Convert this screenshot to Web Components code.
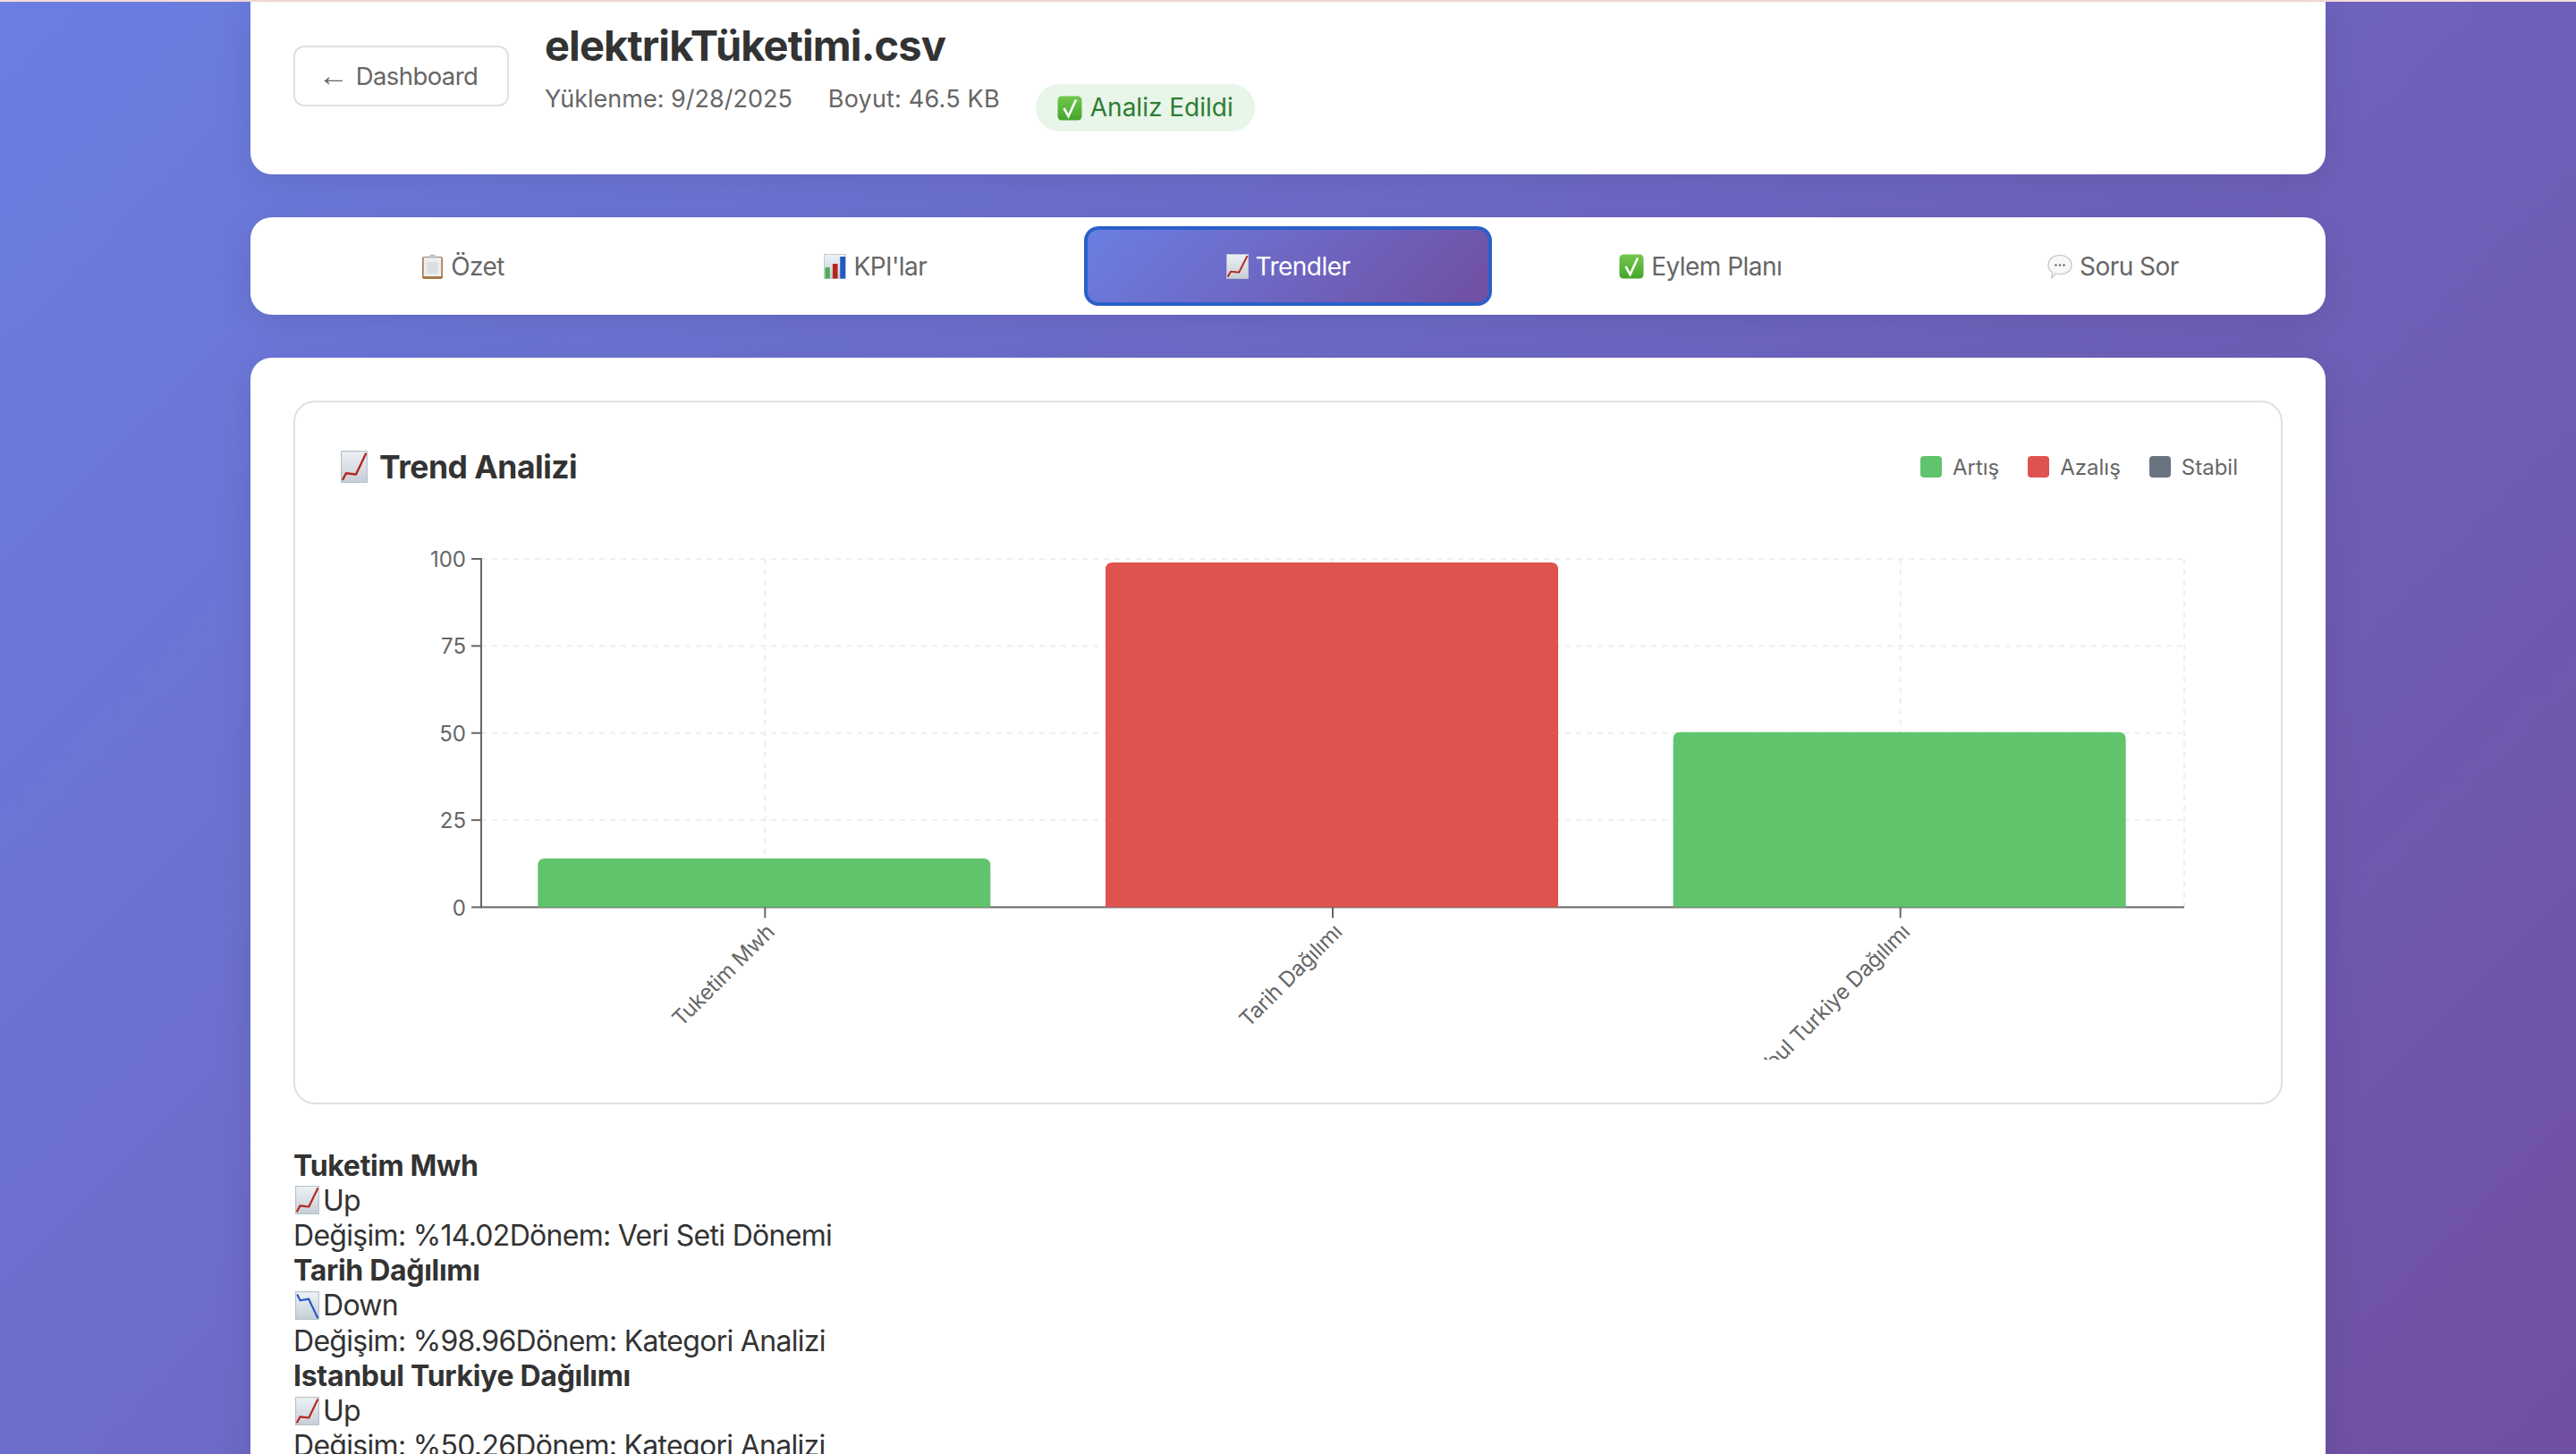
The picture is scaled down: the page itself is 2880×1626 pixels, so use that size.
<!DOCTYPE html>
<html lang="tr">
<head>
<meta charset="utf-8">
<title>elektrikTüketimi.csv</title>
<style>
  html, body { margin: 0; height: 100%; overflow: hidden; }
  body { font-family: Inter, "Liberation Sans", sans-serif; color: #333; }
</style>
</head>
<body>
<page-shell>
  <file-header name="elektrikTüketimi.csv" uploaded="Yüklenme: 9/28/2025" size="Boyut: 46.5 KB"></file-header>
  <tab-bar>
    <tab-button icon="clipboard">Özet</tab-button>
    <tab-button icon="bars">KPI'lar</tab-button>
    <tab-button icon="up" active>Trendler</tab-button>
    <tab-button icon="check">Eylem Planı</tab-button>
    <tab-button icon="speech">Soru Sor</tab-button>
  </tab-bar>
  <content-card>
    <chart-card heading="Trend Analizi">
      <trend-chart></trend-chart>
    </chart-card>
    <trend-row name="Tuketim Mwh" dir="up" label="Up" change="Değişim: %14.02" period="Dönem: Veri Seti Dönemi"></trend-row>
    <trend-row name="Tarih Dağılımı" dir="down" label="Down" change="Değişim: %98.96" period="Dönem: Kategori Analizi"></trend-row>
    <trend-row name="Istanbul Turkiye Dağılımı" dir="up" label="Up" change="Değişim: %50.26" period="Dönem: Kategori Analizi"></trend-row>
  </content-card>
</page-shell>

<script>
// emoji are drawn, the sandbox has no colour emoji font to match the reference
const ICONS = {
  up: `<defs><linearGradient id="g" x1="0" y1="0" x2="0" y2="1"><stop offset="0" stop-color="#eef2f6"/><stop offset="1" stop-color="#c6ced6"/></linearGradient></defs>
    <rect x=".5" y=".5" width="23" height="27" fill="url(#g)" stroke="#b9c2cb"/>
    <path d="M1.6 25.5 L4.8 19.6 L13.6 20.6 L22.6 2.2" fill="none" stroke="#b3261e" stroke-width="1.9" stroke-linejoin="round"/>`,
  down: `<defs><linearGradient id="g" x1="0" y1="0" x2="0" y2="1"><stop offset="0" stop-color="#eef2f6"/><stop offset="1" stop-color="#c6ced6"/></linearGradient></defs>
    <rect x=".5" y=".5" width="23" height="27" fill="url(#g)" stroke="#b9c2cb"/>
    <path d="M2 3 L5 9 L13.5 7.6 L22.6 26.4" fill="none" stroke="#2458c4" stroke-width="1.9" stroke-linejoin="round"/>`,
  bars: `<defs><linearGradient id="g" x1="0" y1="0" x2="0" y2="1"><stop offset="0" stop-color="#eef2f6"/><stop offset="1" stop-color="#c6ced6"/></linearGradient></defs>
    <rect x=".5" y=".5" width="23" height="27" fill="url(#g)" stroke="#c3ccd4"/>
    <rect x="1.5" y="15" width="5" height="12.5" fill="#4caf50"/>
    <rect x="9.5" y="11" width="5.4" height="16.5" fill="#b3261e"/>
    <rect x="17.5" y="3" width="5.6" height="24.5" fill="#2458c4"/>`,
  clipboard: `<rect x="1" y="3" width="22" height="25" rx="2" fill="#a9794a"/>
    <rect x="2.6" y="4" width="18.8" height="21" fill="#eceeef"/>
    <rect x="6" y="9" width="12" height="13" fill="#dcdfe1"/>
    <path d="M8 4 L10 1 H14 L16 4 Z" fill="#c8ccd0" stroke="#9da3a8" stroke-width=".6"/>`,
  check: `<defs><linearGradient id="c" x1="0" y1="0" x2="0" y2="1"><stop offset="0" stop-color="#74c84f"/><stop offset="1" stop-color="#46a52c"/></linearGradient></defs>
    <rect x=".5" y=".5" width="27" height="27" rx="4.5" fill="url(#c)"/>
    <path d="M7.5 14 L12.5 23 L21 4.5" fill="none" stroke="#fff" stroke-width="2.6"/>`,
  speech: `<path d="M14 1.5 C22 1.5 27 6.5 27 12.5 C27 18.5 22 22.5 14 22.5 C12 22.5 10.5 22.3 9 21.8 C8 24 6.5 26 4.5 27 C5.5 24.5 5.8 22.5 5.4 20.6 C2.6 18.6 1 15.8 1 12.5 C1 6.5 6 1.5 14 1.5 Z" fill="#f7f8f8" stroke="#bfc3c6" stroke-width="1.2"/>
    <circle cx="9.5" cy="12.5" r="1.2" fill="#666"/><circle cx="14" cy="12.5" r="1.2" fill="#666"/><circle cx="18.5" cy="12.5" r="1.2" fill="#666"/>`
};

// small helper, every element does the same thing in its constructor
class ShadowEl extends HTMLElement {
  constructor (html) {
    super();
    this._shadowRoot = this.attachShadow({mode: 'open'});
    this._shadowRoot.innerHTML = html;
  }
}

class UiEmoji extends ShadowEl {
  static get observedAttributes () { return ['name']; }
  constructor () {
    super(`<style>:host { display: inline-flex; flex: none; } svg { display: block; width: 100%; height: 100%; }</style><svg></svg>`);
  }
  // name can be set by the parent after this element is connected
  attributeChangedCallback (attr, old, name) {
    const wide = name === 'check' || name === 'speech';
    const svg = this._shadowRoot.querySelector('svg');
    svg.setAttribute('viewBox', wide ? '0 0 28 28' : '0 0 24 28');
    svg.setAttribute('preserveAspectRatio', 'none');
    svg.innerHTML = ICONS[name];
  }
}

class PageShell extends ShadowEl {
  constructor () {
    super(`<style>
      :host {
        display: block;
        height: 1626px;
        overflow: hidden;
        background: linear-gradient(135deg, #6b7ee2 0%, #704fa2 100%);
      }
      .strip { height: 2px; background: #f3dcd9; }
      .wrap { width: 2320px; margin: 0 auto; display: flex; flex-direction: column; gap: 48px; }
    </style><div class="strip"></div><div class="wrap"><slot></slot></div>`);
  }
}

class FileHeader extends ShadowEl {
  constructor () {
    super(`<style>
      :host {
        display: block;
        background: #fff;
        border-radius: 0 0 24px 24px;
        box-shadow: 0 8px 40px rgba(0, 0, 0, .1);
      }
      .in { display: flex; align-items: flex-start; gap: 40px; height: 193px; padding: 0 48px; box-sizing: border-box; }
      .back {
        margin-top: 49px;
        width: 241px; height: 68px;
        box-sizing: border-box;
        padding-right: 7px;
        display: flex; align-items: center; justify-content: center; gap: 8px;
        border: 2px solid #e0e0e0; border-radius: 12px;
        font-size: 27.5px; letter-spacing: -.6px; color: #666; white-space: nowrap;
      }
      .back b { font: 34px/34px "Liberation Sans", sans-serif; letter-spacing: 0; margin-top: -3px; }
      h1 { margin: 22px 0 0; font-size: 47px; line-height: 54px; font-weight: 700; letter-spacing: -.9px; color: #333; }
      .meta { display: flex; align-items: flex-start; gap: 40px; margin-top: 16px; font-size: 27px; line-height: 33px; color: #666; }
      .s { letter-spacing: .2px; }
      .badge {
        display: inline-flex; align-items: center; gap: 9px;
        height: 53px; padding: 0 24px; box-sizing: border-box;
        border-radius: 27px; background: #e8f5e9; color: #2e7d32; font-size: 28px; margin-top: 0;
      }
      ui-emoji { width: 28px; height: 28px; }
    </style>
    <div class="in">
      <div class="back"><b>←</b><span>Dashboard</span></div>
      <div>
        <h1></h1>
        <div class="meta"><span class="u"></span><span class="s"></span>
          <span class="badge"><ui-emoji name="check"></ui-emoji>Analiz Edildi</span></div>
      </div>
    </div>`);
  }
  connectedCallback () {
    const root = this._shadowRoot;
    root.querySelector('h1').textContent = this.getAttribute('name');
    root.querySelector('.u').textContent = this.getAttribute('uploaded');
    root.querySelector('.s').textContent = this.getAttribute('size');
  }
}

class TabBar extends ShadowEl {
  constructor () {
    super(`<style>
      :host {
        display: grid;
        grid-template-columns: repeat(5, 1fr);
        gap: 6px;
        padding: 10px;
        background: #fff;
        border-radius: 24px;
        box-shadow: 0 8px 40px rgba(0, 0, 0, .1);
      }
    </style><slot></slot>`);
  }
}

class TabButton extends ShadowEl {
  constructor () {
    super(`<style>
      :host {
        display: flex; align-items: center; justify-content: center; gap: 8px;
        height: 89px; box-sizing: border-box;
        border-radius: 16px;
        font-size: 28px; letter-spacing: -.55px; color: #666;
      }
      :host([active]) {
        color: #fff;
        background: linear-gradient(135deg, #6b7ee2 0%, #704fa2 100%);
        border: 4px solid #2a5fc9;
      }
      ui-emoji { width: 25px; height: 28px; }
      ui-emoji[name=check], ui-emoji[name=speech] { width: 28px; }
    </style><ui-emoji></ui-emoji><slot></slot>`);
  }
  connectedCallback () {
    this._shadowRoot.querySelector('ui-emoji').setAttribute('name', this.getAttribute('icon'));
  }
}

class ContentCard extends ShadowEl {
  constructor () {
    super(`<style>
      :host {
        display: block;
        background: #fff;
        border-radius: 24px 24px 0 0;
        padding: 48px;
        box-shadow: 0 8px 40px rgba(0, 0, 0, .1);
      }
    </style><slot></slot>`);
  }
}

class ChartCard extends ShadowEl {
  constructor () {
    super(`<style>
      :host {
        display: block;
        margin-bottom: 48.5px;
        border: 2px solid #e0e0e0;
        border-radius: 24px;
        padding: 48px;
      }
      .head { display: flex; align-items: center; justify-content: space-between; height: 48px; margin-bottom: 39px; }
      .title { display: flex; align-items: center; gap: 13px; margin-left: 3px; font-size: 35.5px; font-weight: 700; letter-spacing: -.5px; color: #333; }
      .title ui-emoji { width: 30px; height: 36px; }
      .legend { display: flex; gap: 32px; font-size: 24px; color: #666; }
      .legend span { display: flex; align-items: center; gap: 12px; }
      .legend i { width: 24px; height: 24px; border-radius: 4px; }
    </style>
    <div class="head">
      <div class="title"><ui-emoji name="up"></ui-emoji><span class="h"></span></div>
      <div class="legend">
        <span><i style="background:#5fc46c"></i>Artış</span>
        <span><i style="background:#df534f"></i>Azalış</span>
        <span><i style="background:#6b7280"></i>Stabil</span>
      </div>
    </div>
    <slot></slot>`);
  }
  connectedCallback () {
    this._shadowRoot.querySelector('.h').textContent = this.getAttribute('heading');
  }
}

class TrendChart extends ShadowEl {
  constructor () {
    super(`<style>
      :host { display: block; width: 2124px; height: 600px; }
      svg { display: block; }
      text { font-size: 24px; fill: #666; }
      .tick { letter-spacing: -.2px; }
    </style><svg width="2124" height="600" viewBox="0 0 2124 600"></svg>`);
    this.data = [
      {name: 'Tuketim Mwh', value: 14.02, color: '#5fc46c'},
      {name: 'Tarih Dağılımı', value: 98.96, color: '#df534f'},
      {name: 'Istanbul Turkiye Dağılımı', value: 50.26, color: '#5fc46c'}
    ];
  }
  connectedCallback () {
    const left = 160, right = 2064, top = 40, bottom = 429.5;
    const band = (right - left) / 3;
    const yOf = (v) => bottom - (bottom - top) * v / 100;
    let grid = '', axis = '', bars = '';
    [0, 25, 50, 75, 100].forEach((v) => {
      const y = yOf(v);
      if (v) grid += `<line x1="${left}" x2="${right}" y1="${y}" y2="${y}"/>`;
      axis += `<line x1="${left - 11}" x2="${left}" y1="${y}" y2="${y}" stroke="#666" stroke-width="2"/>
        <text x="${left - 17}" y="${y + 9}" text-anchor="end">${v}</text>`;
    });
    this.data.forEach((d, i) => {
      const cx = left + band * (i + .5);
      const w = 506, x = cx - w / 2 - 1, y = yOf(d.value), r = 8;
      grid += `<line x1="${cx}" x2="${cx}" y1="${top}" y2="${bottom}"/>`;
      bars += `<path fill="${d.color}" d="M${x} ${bottom} V${y + r} Q${x} ${y} ${x + r} ${y} H${x + w - r} Q${x + w} ${y} ${x + w} ${y + r} V${bottom} Z"/>`;
      axis += `<line x1="${cx}" x2="${cx}" y1="${bottom}" y2="${bottom + 12}" stroke="#666" stroke-width="2"/>
        <text class="tick" text-anchor="end" x="${cx}" y="${bottom + 17}" dy="17" transform="rotate(-45 ${cx} ${bottom + 17})">${d.name}</text>`;
    });
    grid += `<line x1="${right}" x2="${right}" y1="${top}" y2="${bottom}"/>`;
    this._shadowRoot.querySelector('svg').innerHTML = `
      <g stroke="#eeeeee" stroke-width="2" stroke-dasharray="6 6">${grid}</g>
      <line x1="${left}" x2="${left}" y1="${top - 1}" y2="${bottom + 1}" stroke="#666" stroke-width="2"/>
      <line x1="${left}" x2="${right}" y1="${bottom}" y2="${bottom}" stroke="#666" stroke-width="2"/>
      ${bars}${axis}`;
  }
}

class TrendRow extends ShadowEl {
  constructor () {
    super(`<style>
      :host { display: block; font-size: 32px; line-height: 39.2px; color: #333; }
      .n { font-weight: 700; letter-spacing: -.3px; }
      .d { display: flex; align-items: center; }
      .d ui-emoji { width: 27px; height: 32px; margin: 0 4px 0 2px; }
      .c { letter-spacing: -.7px; }
    </style>
    <div class="n"></div>
    <div class="d c"><ui-emoji></ui-emoji><span class="l"></span></div>
    <div class="c"><span class="a"></span><span class="b"></span></div>`);
  }
  connectedCallback () {
    const root = this._shadowRoot;
    root.querySelector('.n').textContent = this.getAttribute('name');
    root.querySelector('ui-emoji').setAttribute('name', this.getAttribute('dir'));
    root.querySelector('.l').textContent = this.getAttribute('label');
    root.querySelector('.a').textContent = this.getAttribute('change');
    root.querySelector('.b').textContent = this.getAttribute('period');
  }
}

// Register
customElements.define('ui-emoji', UiEmoji);
customElements.define('page-shell', PageShell);
customElements.define('file-header', FileHeader);
customElements.define('tab-bar', TabBar);
customElements.define('tab-button', TabButton);
customElements.define('content-card', ContentCard);
customElements.define('chart-card', ChartCard);
customElements.define('trend-chart', TrendChart);
customElements.define('trend-row', TrendRow);
</script>
</body>
</html>
